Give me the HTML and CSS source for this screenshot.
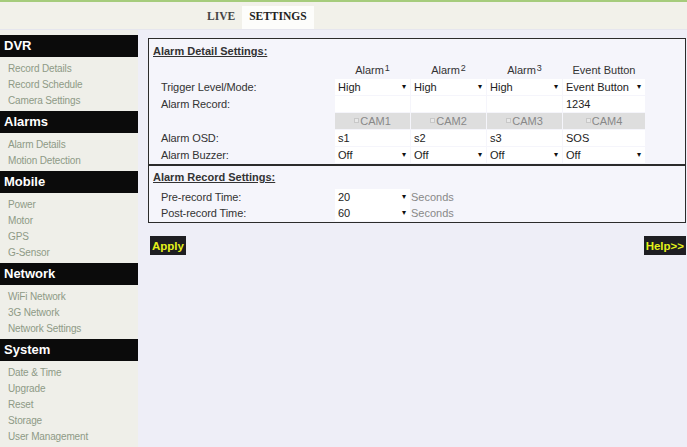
FILE: index.html
```html
<!DOCTYPE html>
<html>
<head>
<meta charset="utf-8">
<link rel="stylesheet" href="styles.css">
</head>
<body>
<header class="topbar">
  <nav class="tabs">
    <span class="tab">LIVE</span>
    <span class="tab active">SETTINGS</span>
  </nav>
</header>
<div class="layout">
  <aside class="sidebar">
    <div class="group"><div class="ghead">DVR</div>
      <ul><li>Record Details</li><li>Record Schedule</li><li>Camera Settings</li></ul></div>
    <div class="group"><div class="ghead">Alarms</div>
      <ul><li>Alarm Details</li><li>Motion Detection</li></ul></div>
    <div class="group"><div class="ghead">Mobile</div>
      <ul><li>Power</li><li>Motor</li><li>GPS</li><li>G-Sensor</li></ul></div>
    <div class="group"><div class="ghead">Network</div>
      <ul><li>WiFi Network</li><li>3G Network</li><li>Network Settings</li></ul></div>
    <div class="group"><div class="ghead">System</div>
      <ul><li>Date &amp; Time</li><li>Upgrade</li><li>Reset</li><li>Storage</li><li>User Management</li></ul></div>
  </aside>
  <main class="main">
    <section class="panel">
      <h2 class="ptitle">Alarm Detail Settings:</h2>
      <div class="grid">
        <div class="lbl"></div>
        <div class="hd">Alarm<span class="num">1</span></div>
        <div class="hd">Alarm<span class="num">2</span></div>
        <div class="hd">Alarm<span class="num">3</span></div>
        <div class="hd">Event Button</div>

        <div class="lbl">Trigger Level/Mode:</div>
        <div class="cell sel">High<span class="arr">&#9662;</span></div>
        <div class="cell sel">High<span class="arr">&#9662;</span></div>
        <div class="cell sel">High<span class="arr">&#9662;</span></div>
        <div class="cell sel">Event Button<span class="arr">&#9662;</span></div>

        <div class="lbl">Alarm Record:</div>
        <div class="cell"></div>
        <div class="cell"></div>
        <div class="cell"></div>
        <div class="cell">1234</div>

        <div class="lbl"></div>
        <div class="cell cam"><span class="cb"></span>CAM1</div>
        <div class="cell cam"><span class="cb"></span>CAM2</div>
        <div class="cell cam"><span class="cb"></span>CAM3</div>
        <div class="cell cam"><span class="cb"></span>CAM4</div>

        <div class="lbl">Alarm OSD:</div>
        <div class="cell">s1</div>
        <div class="cell">s2</div>
        <div class="cell">s3</div>
        <div class="cell">SOS</div>

        <div class="lbl">Alarm Buzzer:</div>
        <div class="cell sel">Off<span class="arr">&#9662;</span></div>
        <div class="cell sel">Off<span class="arr">&#9662;</span></div>
        <div class="cell sel">Off<span class="arr">&#9662;</span></div>
        <div class="cell sel">Off<span class="arr">&#9662;</span></div>
      </div>
    </section>
    <section class="panel panel2">
      <h2 class="ptitle">Alarm Record Settings:</h2>
      <div class="grid2">
        <div class="lbl">Pre-record Time:</div>
        <div class="cell sel">20<span class="arr">&#9662;</span></div>
        <div class="unit">Seconds</div>
        <div class="lbl">Post-record Time:</div>
        <div class="cell sel">60<span class="arr">&#9662;</span></div>
        <div class="unit">Seconds</div>
      </div>
    </section>
    <div class="actions">
      <button class="btn">Apply</button>
      <button class="btn">Help&gt;&gt;</button>
    </div>
  </main>
</div>
</body>
</html>
```
FILE: styles.css
```css
* { box-sizing: border-box; }
html, body { margin: 0; padding: 0; }
body {
  width: 687px;
  height: 447px;
  overflow: hidden;
  background: #eeeef7;
  font-family: "Liberation Sans", Arial, sans-serif;
  color: #333;
}
.topbar {
  height: 30px;
  border-top: 2px solid #a6cc7c;
  background: #f2f1ea;
  border-bottom: 1px solid #e6e6ee;
  padding-left: 200px;
  padding-top: 4px;
}
.tabs { display: flex; height: 100%; }
.tab {
  font-family: "Liberation Serif", serif;
  font-weight: bold;
  font-size: 11.5px;
  color: #444;
  padding: 4px 7px 0;
}
.tab.active { background: #fdfdfb; color: #222; }
.layout { display: flex; align-items: flex-start; }
.sidebar {
  width: 138px;
  background: #efefe9;
  padding-top: 5px;
  height: 420px;
  flex: none;
}
.ghead {
  background: #0b0b0b;
  color: #fff;
  font-weight: bold;
  font-size: 13px;
  height: 22px;
  line-height: 22px;
  padding-left: 4px;
}
.group ul {
  list-style: none;
  margin: 0;
  padding: 4px 0 2px 8px;
}
.group li {
  font-size: 10px;
  letter-spacing: -0.15px;
  line-height: 16px;
  color: #8e9a86;
}
.main {
  flex: 1;
  padding: 8px 1px 0 10px;
}
.panel {
  border: 1px solid #2b2b2b;
  background: #f5f5fb;
  padding: 5px 0 1px 4px;
}
.panel2 {
  border-top-width: 2px;
  margin-top: -1px;
  padding-top: 4px;
  padding-bottom: 1px;
}
.ptitle {
  margin: 0;
  font-size: 11px;
  font-weight: bold;
  text-decoration: underline;
  line-height: 14px;
  color: #333;
}
.grid {
  display: grid;
  grid-template-columns: 173px 75px 75px 75px 82px;
  grid-auto-rows: 16px;
  gap: 1px;
  margin-left: 8px;
  margin-top: 4px;
  font-size: 11px;
}
.lbl {
  font-size: 11px;
  line-height: 16px;
  color: #333;
  letter-spacing: -0.1px;
}
.hd {
  text-align: center;
  line-height: 16px;
  color: #333;
}
.num { font-size: 9px; position: relative; top: -3px; margin-left: 1px; }
.cell {
  background: #fff;
  line-height: 16px;
  padding-left: 3px;
  position: relative;
  color: #222;
  white-space: nowrap;
}
.sel .arr {
  position: absolute;
  right: 4px;
  top: 0;
  font-size: 8px;
  color: #111;
}
.cam {
  background: #dedede;
  color: #888;
  text-align: center;
  padding-left: 0;
}
.cb {
  display: inline-block;
  width: 5px;
  height: 5px;
  border: 1px solid #c8c8c8;
  background: #e8e8e8;
  margin-right: 1px;
  vertical-align: 2px;
}
.grid2 {
  display: grid;
  grid-template-columns: 173px 75px auto;
  grid-auto-rows: 16px;
  gap: 0 1px;
  margin-left: 8px;
  margin-top: 5px;
  font-size: 11px;
}
.unit { color: #888; line-height: 16px; }
.actions {
  display: flex;
  justify-content: space-between;
  margin-top: 13px;
  padding-left: 2px;
}
.btn {
  background: #1e1e22;
  color: #e4f21a;
  border: none;
  font-family: "Liberation Sans", Arial, sans-serif;
  font-weight: bold;
  font-size: 11.5px;
  height: 19px;
  padding: 0 2px;
  border-radius: 0;
}
```
